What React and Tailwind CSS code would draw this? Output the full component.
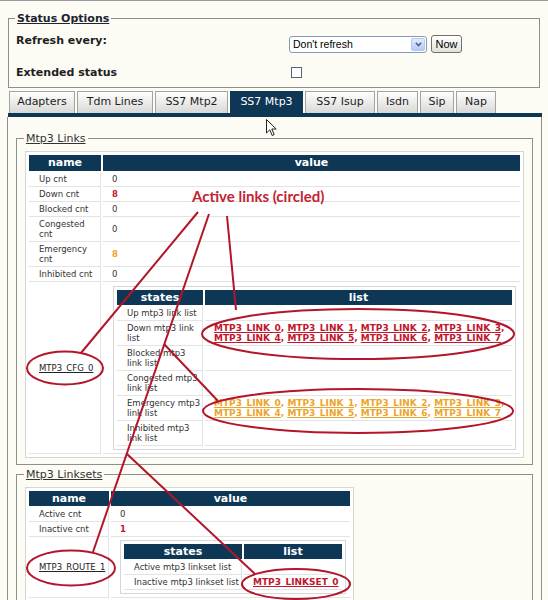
import React from "react";

const TABS = [
  { label: "Adapters", cls: "w-[66px]" },
  { label: "Tdm Lines", cls: "w-[76px]" },
  { label: "SS7 Mtp2", cls: "w-[73px]" },
  { label: "SS7 Mtp3", cls: "w-[73px]", active: true },
  { label: "SS7 Isup", cls: "w-[70px]" },
  { label: "Isdn", cls: "w-[41px]" },
  { label: "Sip", cls: "w-[34px]" },
  { label: "Nap", cls: "w-[40px]" },
];

function Head({ children, tall }) {
  return (
    <div
      className={
        "bg-[#0e3756] text-center text-[11px] font-bold text-white " +
        (tall ? "h-[16px] leading-[16px]" : "h-[15px] leading-[15px]")
      }
    >
      {children}
    </div>
  );
}

function LinkLines({ tone }) {
  const color = tone === "red" ? "text-[#c3152c]" : "text-[#eba52c]";
  const line = (ids) =>
    ids.map((n, i) => (
      <React.Fragment key={n}>
        <span className={"underline " + color}>MTP3_LINK_{n}</span>
        <span className={color}>{i < ids.length - 1 ? ", " : n === 3 ? "," : ""}</span>
      </React.Fragment>
    ));
  return (
    <div className="whitespace-nowrap text-[9px] font-bold leading-[10px]">
      <div>{line([0, 1, 2, 3])}</div>
      <div>{line([4, 5, 6, 7])}</div>
    </div>
  );
}

const nameCell = "flex items-center pl-[10px] border-b border-r border-[#e3e3e3]";
const valueCell = "flex items-center pl-[9px] border-b border-[#e3e3e3]";

function CountRow({ name, value, tall, valueClass }) {
  const h = tall ? "h-[25px]" : "h-[15px]";
  return (
    <>
      <div className={nameCell + " " + h}>{name}</div>
      <div className={valueCell + " " + h}>
        <span className={valueClass}>{value}</span>
      </div>
    </>
  );
}

function StateRow({ label, tall, children, nowrap }) {
  const h = tall ? "h-[25px]" : "h-[15px]";
  return (
    <>
      <div className={nameCell + " " + h + (nowrap ? " whitespace-nowrap" : "")}>
        <div>{label}</div>
      </div>
      <div className={valueCell + " " + h}>{children}</div>
    </>
  );
}

function LinksTable() {
  return (
    <div className="w-[499px] border border-[#d6d6d6] bg-white p-[3px] text-[8.5px] leading-[10px] text-[#333]">
      <div className="grid grid-cols-[72px_1fr] gap-x-[2px]">
        <Head tall>name</Head>
        <Head tall>value</Head>
      </div>
      <div className="mt-[1px] grid grid-cols-[72px_1fr] gap-x-[2px]">
        <CountRow name="Up cnt" value="0" />
        <CountRow name="Down cnt" value="8" valueClass="font-bold text-[#c3152c]" />
        <CountRow name="Blocked cnt" value="0" />
        <CountRow name={<>Congested<br />cnt</>} value="0" tall />
        <CountRow name={<>Emergency<br />cnt</>} value="8" tall valueClass="font-bold text-[#eba52c]" />
        <CountRow name="Inhibited cnt" value="0" />
        <div className={nameCell}>
          <span className="underline text-[#222]">MTP3_CFG_0</span>
        </div>
        <div className="border-b border-[#e3e3e3] pt-[4px] pl-[10px] pr-[4px] pb-[3px]">
          <div className="border border-[#d6d6d6] p-[3px]">
            <div className="grid grid-cols-[86px_1fr] gap-x-[2px]">
              <Head>states</Head>
              <Head>list</Head>
            </div>
            <div className="mt-[1px] grid grid-cols-[86px_1fr] gap-x-[2px]">
              <StateRow label="Up mtp3 link list" nowrap />
              <StateRow label={<>Down mtp3 link<br />list</>} tall>
                <LinkLines tone="red" />
              </StateRow>
              <StateRow label={<>Blocked mtp3<br />link list</>} tall />
              <StateRow label={<>Congested mtp3<br />link list</>} tall nowrap />
              <StateRow label={<>Emergency mtp3<br />link list</>} tall nowrap>
                <LinkLines tone="orange" />
              </StateRow>
              <StateRow label={<>Inhibited mtp3<br />link list</>} tall />
            </div>
          </div>
        </div>
      </div>
    </div>
  );
}

function LinksetsTable() {
  return (
    <div className="w-[329px] border border-[#d6d6d6] bg-white p-[3px] text-[8.5px] leading-[10px] text-[#333]">
      <div className="grid grid-cols-[80px_1fr] gap-x-[2px]">
        <Head>name</Head>
        <Head>value</Head>
      </div>
      <div className="mt-[1px] grid grid-cols-[80px_1fr] gap-x-[2px]">
        <CountRow name="Active cnt" value="0" />
        <CountRow name="Inactive cnt" value="1" valueClass="font-bold text-[#c3152c]" />
        <div className={nameCell}>
          <span className="underline text-[#222]">MTP3_ROUTE_1</span>
        </div>
        <div className="border-b border-[#e3e3e3] pt-[3px] pl-[9px] pr-[4px] pb-[3px]">
          <div className="border border-[#d6d6d6] p-[3px]">
            <div className="grid grid-cols-[118px_1fr] gap-x-[2px]">
              <Head>states</Head>
              <Head>list</Head>
            </div>
            <div className="mt-[1px] grid grid-cols-[118px_1fr] gap-x-[2px]">
              <StateRow label="Active mtp3 linkset list" nowrap />
              <StateRow label="Inactive mtp3 linkset list" nowrap>
                <span className="whitespace-nowrap text-[9px] font-bold underline text-[#c3152c]">
                  MTP3_LINKSET_0
                </span>
              </StateRow>
            </div>
          </div>
        </div>
      </div>
    </div>
  );
}

function Legend({ children, bold }) {
  return (
    <legend
      className={
        "ml-[-1px] px-[2px] text-[11px] leading-[13px] underline " +
        (bold ? "font-bold text-[#1d2331]" : "text-[#333]")
      }
    >
      {children}
    </legend>
  );
}

export default function App() {
  return (
    <div className="relative h-[600px] w-[548px] overflow-hidden border-t border-[#9a9a9a] bg-[#fcfbf4] font-['DejaVu_Sans',sans-serif] text-[#1e1e1e]">
      <div className="ml-[7px] w-[535px]">
        {/* refresh controls */}
        <fieldset className="mt-[11px] ml-[1px] w-[532px] border border-[#8f8f8f] pl-[7px] pt-[6px] pb-[5px]">
          <Legend bold>Status Options</Legend>
          <div className="grid h-[21px] grid-cols-[273px_1fr]">
            <div className="mt-[3px] text-[11px] font-bold leading-[13px]">Refresh every:</div>
            <div className="flex items-start">
              <div className="mt-[5px] flex h-[17px] w-[138px] items-center rounded-[3px] border border-[#7f9db9] bg-white pl-[3px] pr-[1px] font-['Liberation_Sans',sans-serif] text-[10.5px] text-black">
                <span className="flex-1">Don't refresh</span>
                <span className="flex h-[13px] w-[14px] items-center justify-center rounded-[2px] border border-[#b4c6ee] bg-gradient-to-b from-[#e4ecfd] to-[#b5c9f3]">
                  <svg width="7" height="5" viewBox="0 0 7 5">
                    <path d="M0.8 0.8 L3.5 3.6 L6.2 0.8" stroke="#4d6185" strokeWidth="1.6" fill="none" />
                  </svg>
                </span>
              </div>
              <button className="ml-[4px] mt-[4px] h-[18px] w-[31px] rounded-[3px] border border-[#707070] bg-gradient-to-b from-white to-[#e2e2da] font-['Liberation_Sans',sans-serif] text-[11px] leading-[16px] text-black">
                Now
              </button>
            </div>
          </div>
          <div className="mt-[10px] grid h-[20px] grid-cols-[273px_1fr]">
            <div className="mt-[4px] text-[11px] font-bold leading-[13px]">Extended status</div>
            <div>
              <div className="ml-[2px] mt-[5px] h-[11px] w-[11px] border border-[#55657c] bg-white" />
            </div>
          </div>
        </fieldset>

        {/* tab strip */}
        <div className="mt-[3px] flex h-[22px] gap-[2px] pl-[2px]">
          {TABS.map((t) => (
            <div
              key={t.label}
              className={
                "flex items-center justify-center whitespace-nowrap text-[11px] " +
                t.cls +
                (t.active
                  ? " bg-[#0e3756] text-white"
                  : " border border-b-0 border-[#a3a3a3] bg-gradient-to-b from-[#ffffff] to-[#d8d8d6] text-[#1e1e1e]")
              }
            >
              {t.label}
            </div>
          ))}
        </div>
        <div className="ml-[1px] h-[4px] bg-[#0e3756]" />

        <div className="h-[500px] border-l border-r border-[#8f8f8f] pt-[15px]">
          <fieldset className="ml-[8px] w-[517px] border border-[#8f8f8f] pl-[8px] pt-[6px] pb-[6px]">
            <Legend>Mtp3 Links</Legend>
            <LinksTable />
          </fieldset>
          <fieldset className="mt-[3px] ml-[8px] w-[517px] border border-[#8f8f8f] pl-[8px] pt-[6px] pb-[8px]">
            <Legend>Mtp3 Linksets</Legend>
            <LinksetsTable />
          </fieldset>
        </div>
      </div>

      {/* mouse pointer */}
      <svg className="pointer-events-none absolute left-[266px] top-[118px]" width="12" height="18" viewBox="0 0 12 18">
        <path d="M0.5 0.5 L0.5 14 L3.8 10.8 L6.2 16.5 L8.2 15.6 L5.8 10 L10.2 10 Z" fill="#fff" stroke="#222" strokeWidth="1" strokeLinejoin="round" />
      </svg>

      {/* annotation callouts */}
      <div className="pointer-events-none absolute left-[192px] top-[186px] whitespace-nowrap font-['Lato',sans-serif] text-[15px] font-bold leading-[18px] text-[#c3232f]">
        Active links (circled)
      </div>
      <svg className="pointer-events-none absolute left-0 top-0" width="548" height="600" viewBox="0 0 548 600">
        <g stroke="#b3162a" strokeWidth="2" fill="none">
          <line x1="198" y1="211" x2="81" y2="352" />
          <line x1="209" y1="213" x2="93" y2="551" />
          <line x1="227" y1="215" x2="236" y2="309" />
          <line x1="164" y1="343" x2="218" y2="400" />
          <line x1="127" y1="453" x2="255" y2="573" />
          <ellipse cx="65" cy="367" rx="38" ry="16.5" />
          <ellipse cx="358" cy="333" rx="156" ry="25" />
          <ellipse cx="358" cy="410" rx="155" ry="22" />
          <ellipse cx="71" cy="567" rx="44" ry="17.5" />
          <ellipse cx="296" cy="583" rx="54" ry="15" />
        </g>
      </svg>
    </div>
  );
}
